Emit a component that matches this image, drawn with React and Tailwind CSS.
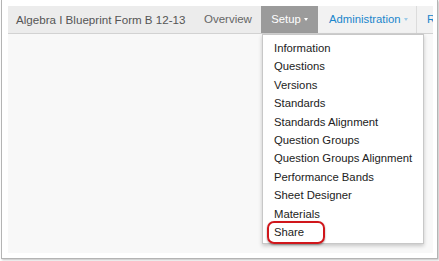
export default function App() {
  const items = [
    "Information",
    "Questions",
    "Versions",
    "Standards",
    "Standards Alignment",
    "Question Groups",
    "Question Groups Alignment",
    "Performance Bands",
    "Sheet Designer",
    "Materials",
  ];
  return (
    <div className="w-[439px] h-[261px] bg-white" style={{ fontFamily: '"Liberation Sans", Arial, sans-serif' }}>
      <div className="relative ml-[1px] w-[437px] h-[259px] border-l border-r border-b border-[#b4b4b4] shadow-[1px_1px_2px_rgba(0,0,0,0.25)] bg-white pl-[6px] pt-[6px] pr-[5px] pb-[5px]">
        <div className="w-[425px] h-[247px] bg-[#f8f8f8] overflow-hidden">
          <div className="flex h-[28px] bg-[#f2f2f2] border-b border-[#d2d2d2] text-[11.3px] items-stretch whitespace-nowrap">
            <div className="w-[186px] shrink-0 pl-[8px] flex items-center text-[#555] text-[11.6px] bg-[#ececec]">Algebra I Blueprint Form B 12-13</div>
            <div className="w-[67px] shrink-0 pl-[10px] flex items-center text-[#666] text-[11.5px] bg-[#ececec]">Overview</div>
            <div className="w-[57px] shrink-0 flex items-center justify-center text-white bg-[#9b9b9b]">
              Setup
              <span className="ml-[3px] inline-block w-0 h-0 border-l-[2.5px] border-r-[2.5px] border-t-[3px] border-l-transparent border-r-transparent border-t-white"></span>
            </div>
            <div className="w-[99px] shrink-0 pl-[11px] flex items-center text-[#1a86cc] border-r border-[#dcdcdc]">
              Administration
              <span className="ml-[3px] inline-block w-0 h-0 border-l-[2.5px] border-r-[2.5px] border-t-[3px] border-l-transparent border-r-transparent border-t-[#9fcbe8]"></span>
            </div>
            <div className="shrink-0 pl-[10px] flex items-center text-[#1a86cc]">Reports</div>
          </div>
        </div>
        <div className="absolute left-[260px] top-[34px] w-[162px] h-[210px] bg-white border border-[#c8c8c8] shadow-[0_2px_4px_rgba(0,0,0,0.2)] pt-[4px] text-[11.3px] text-[#222]">
          {items.map((t) => (
            <div key={t} className="h-[18.4px] leading-[18.4px] pl-[11px] whitespace-nowrap">{t}</div>
          ))}
          <div className="h-[18.4px] leading-[18.4px] pl-[11px] relative">
            Share
            <div className="absolute left-[4px] top-[-2px] w-[58px] h-[23px] rounded-[7px] border-[2.5px] border-[#d0161b] shadow-[0_1px_2px_rgba(0,0,0,0.4)]"></div>
          </div>
        </div>
      </div>
    </div>
  );
}
